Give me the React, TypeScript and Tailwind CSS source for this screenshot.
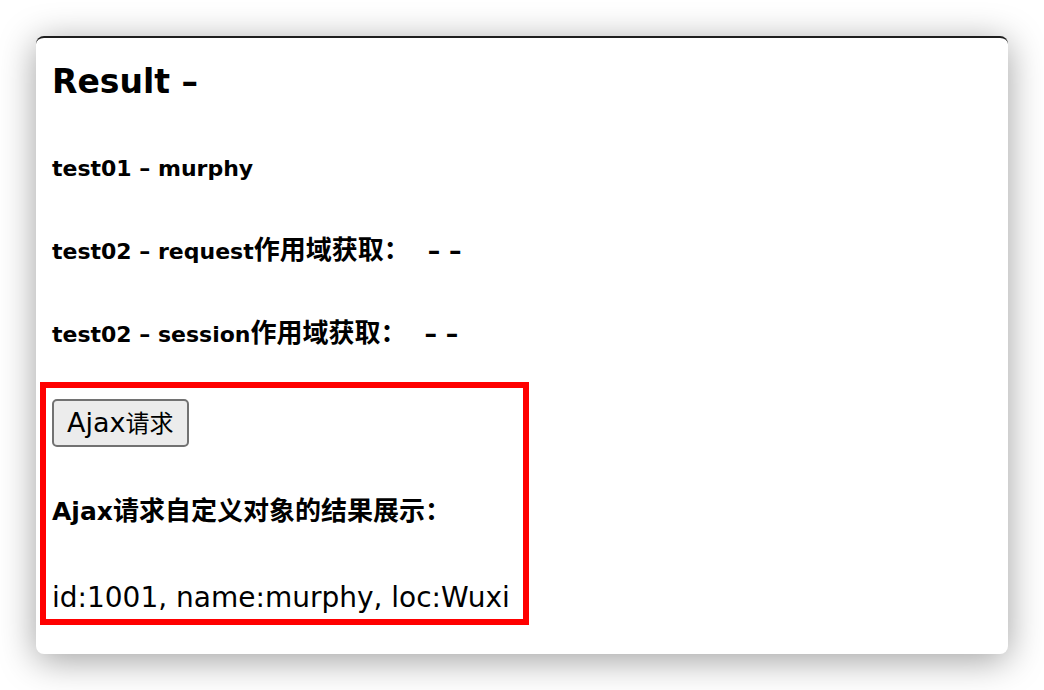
export default function App() {
  return (
    <div className="w-[1044px] h-[690px] bg-white pt-[36px] pl-[36px] font-['DejaVu_Sans','Noto_Sans_CJK_SC',sans-serif] text-black">
      <div className="w-[972px] h-[618px] bg-white border-t-2 border-[#1e1e1e] rounded-[8px] shadow-[0_6px_36px_rgba(0,0,0,0.38)] pl-[16px] flex flex-col items-start">
        <h2 className="mt-[24px] text-[33px] leading-[40px] font-bold">Result –</h2>

        <h4 className="mt-[53px] text-[22px] leading-[28px] font-bold">test01 – murphy</h4>
        <h4 className="mt-[55px] text-[22px] leading-[28px] font-bold">
          test02 – request<span className="text-[26px] leading-[0]">作用域获取：</span>
          <span className="ml-[18px] text-[25px] leading-[0]">– –</span>
        </h4>
        <h4 className="mt-[55px] text-[22px] leading-[28px] font-bold">
          test02 – session<span className="text-[26px] leading-[0]">作用域获取：</span>
          <span className="ml-[18px] text-[25px] leading-[0]">– –</span>
        </h4>

        <div className="mt-[33px] -ml-[12px] w-[489px] border-[6px] border-[#ff0000] pl-[6px] pt-[11px] pb-[5px] flex flex-col items-start">
          <button className="h-[48px] px-[13px] border-2 border-[#727272] bg-[#ececec] rounded-[5px] text-[27px] leading-[32px]">
            Ajax<span className="text-[24px] leading-[0]">请求</span>
          </button>
          <h5 className="mt-[50px] text-[25px] leading-[30px] font-bold">
            Ajax<span className="text-[26px] leading-[0]">请求自定义对象的结果展示：</span>
          </h5>
          <div className="mt-[55px] text-[28px] leading-[32px]">id:1001, name:murphy, loc:Wuxi</div>
        </div>
      </div>
    </div>
  );
}
